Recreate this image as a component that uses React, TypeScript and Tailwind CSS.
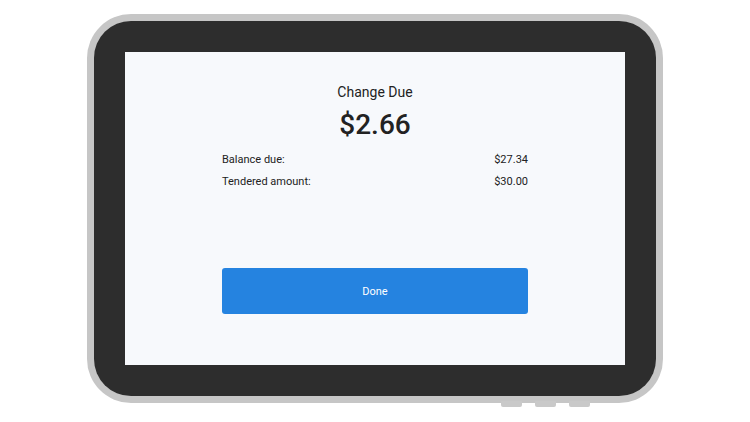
import React from "react";

export default function App() {
  return (
    <div
      className="w-[750px] h-[422px] bg-white flex justify-center pt-[14px]"
      style={{ fontFamily: "Roboto, 'Liberation Sans', sans-serif" }}
    >
      <div className="relative w-[576px] h-[389px]">
        <div className="w-full h-full rounded-[44px] bg-[#c6c6c6] p-[7px]">
          <div className="w-full h-full rounded-[37px] bg-[#2d2d2d] p-[31px]">
            <div className="w-[500px] h-[313px] bg-[#f7f9fc] flex flex-col items-center pt-[30px] text-[#222222]">
              <div className="text-[14px] leading-[20px]">Change Due</div>
              <div className="text-[28px] leading-[36px] mt-[5px] font-medium">$2.66</div>
              <div className="w-[306px] mt-[6px] flex flex-col text-[11px]">
                <div className="flex justify-between leading-[22px]">
                  <span>Balance due:</span>
                  <span>$27.34</span>
                </div>
                <div className="flex justify-between leading-[22px]">
                  <span>Tendered amount:</span>
                  <span>$30.00</span>
                </div>
              </div>
              <button className="mt-[75px] w-[306px] h-[46px] rounded-[3px] bg-[#2583e0] text-white text-[11px] flex items-center justify-center pt-[3px]">
                Done
              </button>
            </div>
          </div>
        </div>
        <div className="absolute top-[387px] left-[414px] flex gap-[13px]">
          <div className="w-[21px] h-[6px] bg-[#c9c9c9] rounded-b-[2px]" />
          <div className="w-[21px] h-[6px] bg-[#c9c9c9] rounded-b-[2px]" />
          <div className="w-[21px] h-[6px] bg-[#c9c9c9] rounded-b-[2px]" />
        </div>
      </div>
    </div>
  );
}
